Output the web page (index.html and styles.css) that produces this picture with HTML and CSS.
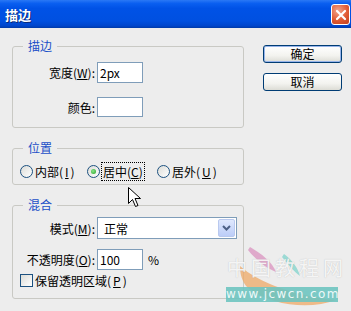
FILE: index.html
```html
<!DOCTYPE html>
<html lang="zh-CN">
<head>
    <meta charset="UTF-8">
    <title>描边</title>
    <link rel="stylesheet" href="styles.css">
</head>
<body>
    <!-- Title bar -->
    <header class="titlebar">
        <span class="title">描边</span>
        <span class="close-btn">
            <svg width="12" height="12" viewBox="0 0 12 12"><path d="M2 2 L10 10 M10 2 L2 10" stroke="#fff" stroke-width="2.2" stroke-linecap="round"/></svg>
        </span>
    </header>

    <div class="dialog">
        <main class="main">
            <!-- Stroke -->
            <section class="group group-stroke">
                <span class="legend">描边</span>
                <div class="row">
                    <label class="label">宽度(<u>W</u>):</label>
                    <div class="input">2px</div>
                </div>
                <div class="row">
                    <label class="label">颜色:</label>
                    <div class="input color"></div>
                </div>
            </section>

            <!-- Location -->
            <section class="group group-location">
                <span class="legend">位置</span>
                <div class="radios">
                    <span class="radio-item w1"><span class="radio"></span>内部(<u>I</u>)</span>
                    <span class="radio-item w2"><span class="radio checked"></span><span class="focus">居中(<u>C</u>)</span></span>
                    <span class="radio-item"><span class="radio"></span>居外(<u>U</u>)</span>
                </div>
            </section>

            <!-- Blending -->
            <section class="group group-blend">
                <span class="legend">混合</span>
                <div class="row">
                    <label class="label">模式(<u>M</u>):</label>
                    <div class="select">
                        <span class="select-value">正常</span>
                        <span class="select-arrow">
                            <svg width="9" height="6" viewBox="0 0 9 6"><path d="M1 1 L4.5 4.5 L8 1" fill="none" stroke="#4d6185" stroke-width="2"/></svg>
                        </span>
                    </div>
                </div>
                <div class="row row-opacity">
                    <label class="label">不透明度(<u>O</u>):</label>
                    <div class="input">100</div>
                    <span class="unit">%</span>
                </div>
                <div class="check-row">
                    <span class="checkbox"></span>保留透明区域(<u>P</u>)
                </div>
            </section>
        </main>

        <aside class="side">
            <button class="btn btn-default">确定</button>
            <button class="btn">取消</button>
        </aside>
    </div>

    <!-- Mouse pointer -->
    <svg class="cursor" width="13" height="21" viewBox="0 0 13 21">
        <path d="M0.5 0.5 L0.5 16.5 L4.5 12.5 L7.5 19.5 L10 18.5 L7 11.5 L12.5 11.5 Z" fill="#fff" stroke="#000" stroke-width="1"/>
    </svg>

    <!-- Watermark -->
    <div class="watermark">
        <svg class="feathers" width="127" height="69" viewBox="0 0 127 69">
            <path d="M16 24 C34 40 70 54 112 58 C86 68 48 64 24 46 C18 40 16 32 16 24 Z" fill="#eda866" opacity="0.75"/>
            <path d="M26 5 C38 12 48 20 52 30 C42 26 32 18 24 8 Z" fill="#d98cbc" opacity="0.7"/>
            <path d="M60 12 C68 18 74 26 76 34 C70 30 64 22 58 15 Z" fill="#7fd3cb" opacity="0.75"/>
        </svg>
        <div class="wm-text">中国教程网</div>
        <div class="wm-url">www.jcwcn.com</div>
    </div>
</body>
</html>
```

FILE: styles.css
```css
* {
    margin: 0;
    padding: 0;
    box-sizing: border-box;
}

body {
    font-family: "Noto Sans CJK SC", "DejaVu Sans", sans-serif;
    font-size: 12px;
    color: #000000;
    background-color: #ededed;
    width: 351px;
    height: 311px;
    overflow: hidden;
    position: relative;
}

u {
    text-decoration: underline;
    text-underline-offset: 1px;
}

/* Title bar */
.titlebar {
    height: 28px;
    display: flex;
    justify-content: space-between;
    align-items: center;
    padding-left: 5px;
    background: linear-gradient(#2a78f5 0%, #0a5ff0 12%, #0052e6 30%, #0050e0 75%, #0046cc 92%, #003aa8 100%);
}

.title {
    color: #ffffff;
    font-size: 13px;
    font-weight: bold;
    text-shadow: 1px 1px 0 #0a2a7a;
}

.close-btn {
    width: 19px;
    height: 21px;
    margin-right: 1px;
    margin-top: 1px;
    border: 1px solid #ffffff;
    border-radius: 3px;
    background: radial-gradient(circle at 35% 30%, #f2a48c, #e05a33 55%, #c2401f);
    display: flex;
    align-items: center;
    justify-content: center;
}

/* Layout */
.dialog {
    display: flex;
    padding-left: 12px;
}

.main {
    width: 232px;
}

.side {
    margin-left: 19px;
    width: 79px;
    display: flex;
    flex-direction: column;
    padding-top: 17px;
    gap: 10px;
}

/* Group boxes */
.group {
    position: relative;
    border: 1px solid #c9c9c4;
    border-radius: 3px;
}

.legend {
    position: absolute;
    top: -9px;
    left: 10px;
    padding: 0 5px;
    background-color: #ededed;
    color: #1a4fc8;
    line-height: 16px;
}

.group-stroke {
    margin-top: 18px;
    height: 82px;
    padding-top: 15px;
    display: flex;
    flex-direction: column;
    gap: 14px;
}

.group-location {
    margin-top: 20px;
    height: 37px;
    padding: 15px 0 0 7px;
}

.group-blend {
    margin-top: 20px;
    height: 94px;
    padding: 11px 0 0 0;
}

/* Rows */
.row {
    display: flex;
    align-items: center;
}

.label {
    width: 82px;
    margin-right: 2px;
    text-align: right;
    white-space: nowrap;
}

.input {
    width: 46px;
    height: 21px;
    border: 1px solid #7f9db9;
    background-color: #ffffff;
    padding-left: 2px;
    line-height: 19px;
}

.input.color {
    height: 20px;
}

.row-opacity {
    margin-top: 10px;
}

.unit {
    margin-left: 5px;
}

/* Select */
.select {
    width: 140px;
    height: 22px;
    border: 1px solid #7f9db9;
    background-color: #ffffff;
    display: flex;
    align-items: center;
    justify-content: space-between;
    padding: 1px;
}

.select-value {
    padding-left: 5px;
}

.select-arrow {
    width: 17px;
    height: 18px;
    border: 1px solid #b9c9ef;
    border-radius: 2px;
    background: linear-gradient(#dfe8fd, #bccdf8);
    display: flex;
    align-items: center;
    justify-content: center;
}

/* Radios */
.radios {
    display: flex;
    align-items: center;
    height: 14px;
}

.radio-item {
    display: flex;
    align-items: center;
    gap: 2px;
    white-space: nowrap;
}

.radio-item.w1 {
    width: 67px;
}

.radio-item.w2 {
    width: 70px;
}

.radio {
    width: 13px;
    height: 13px;
    border: 1px solid #1c5180;
    border-radius: 50%;
    background: linear-gradient(135deg, #dcdcd7, #ffffff);
    position: relative;
}

.radio.checked::after {
    content: "";
    position: absolute;
    top: 3px;
    left: 3px;
    width: 5px;
    height: 5px;
    border-radius: 50%;
    background: radial-gradient(circle at 40% 40%, #8ce68c, #21a121);
}

.focus {
    outline: 1px dotted #000000;
    outline-offset: 0;
    padding: 0 1px;
}

/* Checkbox */
.check-row {
    display: flex;
    align-items: center;
    gap: 2px;
    margin-top: 4px;
    padding-left: 7px;
    height: 13px;
}

.checkbox {
    width: 13px;
    height: 13px;
    border: 1px solid #1c5180;
    background: linear-gradient(135deg, #dcdcd7, #ffffff);
}

/* Buttons */
.btn {
    height: 18px;
    width: 79px;
    font-family: inherit;
    font-size: 12px;
    color: #000000;
    border: 1px solid #003c74;
    border-radius: 3px;
    background: linear-gradient(#ffffff, #f3f3ef 60%, #dcdcd5);
    line-height: 14px;
}

.btn-default {
    box-shadow: inset 0 0 0 1px #97b4ea;
}

/* Pointer */
.cursor {
    position: absolute;
    left: 128px;
    top: 187px;
}

/* Watermark */
.watermark {
    position: absolute;
    left: 224px;
    top: 242px;
    width: 127px;
    height: 69px;
}

.feathers {
    position: absolute;
    left: 0;
    top: 0;
}

.wm-text {
    position: absolute;
    left: 3px;
    top: 12px;
    font-size: 20px;
    letter-spacing: 4px;
    color: rgba(255, 255, 255, 0.85);
    text-shadow: 0 0 1px rgba(150, 150, 150, 0.6);
    line-height: 28px;
    white-space: nowrap;
}

.wm-url {
    position: absolute;
    left: 2px;
    top: 45px;
    width: 112px;
    height: 15px;
    background-color: rgba(110, 196, 192, 0.9);
    color: #eef8f8;
    font-family: "DejaVu Sans", sans-serif;
    font-size: 12px;
    letter-spacing: 1.4px;
    line-height: 15px;
    text-align: center;
}
```
